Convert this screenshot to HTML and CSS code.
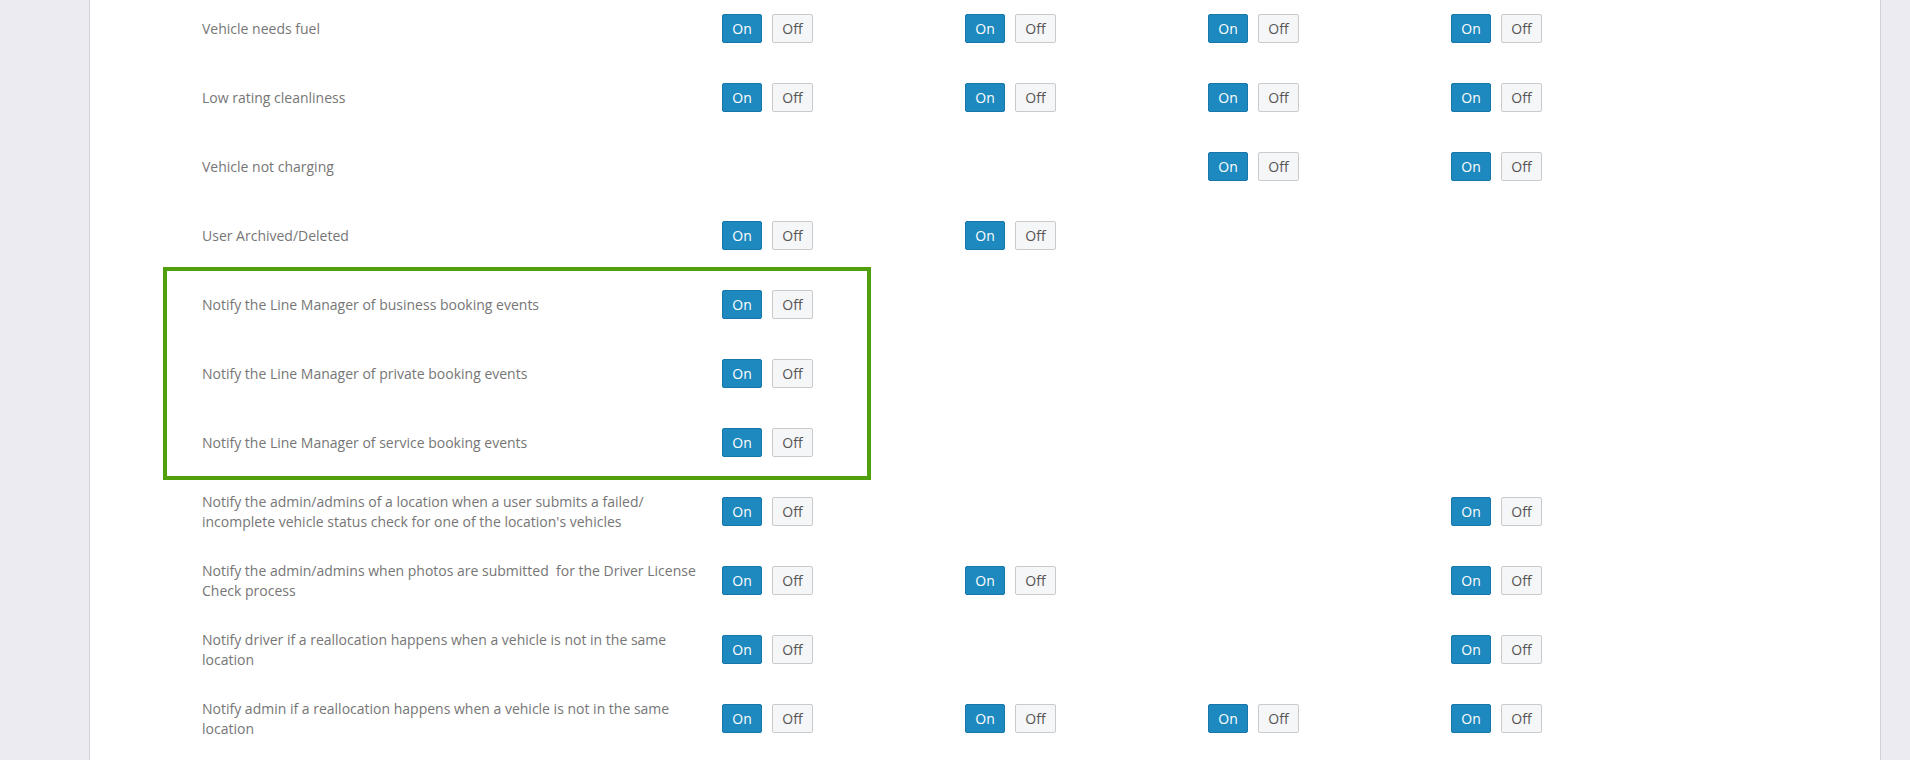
FILE: index.html
```html
<!DOCTYPE html>
<html lang="en">
<head>
<meta charset="utf-8">
<title>Notification settings</title>
<link rel="stylesheet" href="styles.css">
</head>
<body>
<div class="panel">
  <div class="table">
    <div class="row">
      <div class="label">Vehicle needs fuel</div>
      <div class="cell"><span class="btn on">On</span><span class="btn off">Off</span></div>
      <div class="cell"><span class="btn on">On</span><span class="btn off">Off</span></div>
      <div class="cell"><span class="btn on">On</span><span class="btn off">Off</span></div>
      <div class="cell"><span class="btn on">On</span><span class="btn off">Off</span></div>
    </div>
    <div class="row">
      <div class="label">Low rating cleanliness</div>
      <div class="cell"><span class="btn on">On</span><span class="btn off">Off</span></div>
      <div class="cell"><span class="btn on">On</span><span class="btn off">Off</span></div>
      <div class="cell"><span class="btn on">On</span><span class="btn off">Off</span></div>
      <div class="cell"><span class="btn on">On</span><span class="btn off">Off</span></div>
    </div>
    <div class="row">
      <div class="label">Vehicle not charging</div>
      <div class="cell"></div>
      <div class="cell"></div>
      <div class="cell"><span class="btn on">On</span><span class="btn off">Off</span></div>
      <div class="cell"><span class="btn on">On</span><span class="btn off">Off</span></div>
    </div>
    <div class="row">
      <div class="label">User Archived/Deleted</div>
      <div class="cell"><span class="btn on">On</span><span class="btn off">Off</span></div>
      <div class="cell"><span class="btn on">On</span><span class="btn off">Off</span></div>
      <div class="cell"></div>
      <div class="cell"></div>
    </div>
    <div class="row">
      <div class="label">Notify the Line Manager of business booking events</div>
      <div class="cell"><span class="btn on">On</span><span class="btn off">Off</span></div>
      <div class="cell"></div>
      <div class="cell"></div>
      <div class="cell"></div>
    </div>
    <div class="row">
      <div class="label">Notify the Line Manager of private booking events</div>
      <div class="cell"><span class="btn on">On</span><span class="btn off">Off</span></div>
      <div class="cell"></div>
      <div class="cell"></div>
      <div class="cell"></div>
    </div>
    <div class="row">
      <div class="label">Notify the Line Manager of service booking events</div>
      <div class="cell"><span class="btn on">On</span><span class="btn off">Off</span></div>
      <div class="cell"></div>
      <div class="cell"></div>
      <div class="cell"></div>
    </div>
    <div class="row">
      <div class="label">Notify the admin/admins of a location when a user submits a failed/ incomplete vehicle status check for one of the location's vehicles</div>
      <div class="cell"><span class="btn on">On</span><span class="btn off">Off</span></div>
      <div class="cell"></div>
      <div class="cell"></div>
      <div class="cell"><span class="btn on">On</span><span class="btn off">Off</span></div>
    </div>
    <div class="row">
      <div class="label">Notify the admin/admins when photos are submitted&nbsp; for the Driver License Check process</div>
      <div class="cell"><span class="btn on">On</span><span class="btn off">Off</span></div>
      <div class="cell"><span class="btn on">On</span><span class="btn off">Off</span></div>
      <div class="cell"></div>
      <div class="cell"><span class="btn on">On</span><span class="btn off">Off</span></div>
    </div>
    <div class="row">
      <div class="label">Notify driver if a reallocation happens when a vehicle is not in the same location</div>
      <div class="cell"><span class="btn on">On</span><span class="btn off">Off</span></div>
      <div class="cell"></div>
      <div class="cell"></div>
      <div class="cell"><span class="btn on">On</span><span class="btn off">Off</span></div>
    </div>
    <div class="row">
      <div class="label">Notify admin if a reallocation happens when a vehicle is not in the same location</div>
      <div class="cell"><span class="btn on">On</span><span class="btn off">Off</span></div>
      <div class="cell"><span class="btn on">On</span><span class="btn off">Off</span></div>
      <div class="cell"><span class="btn on">On</span><span class="btn off">Off</span></div>
      <div class="cell"><span class="btn on">On</span><span class="btn off">Off</span></div>
    </div>
  </div>
  <div class="highlight"></div>
</div>
</body>
</html>
```
FILE: styles.css
```css
html, body {
  margin: 0;
  padding: 0;
  height: 760px;
  overflow: hidden;
}
body {
  background: #edebf2;
  font-family: "Open Sans", "Liberation Sans", sans-serif;
  font-size: 14px;
}
.panel {
  position: relative;
  margin: 0 29px 0 89px;
  height: 760px;
  background: #ffffff;
  border-left: 1px solid #d3d1d8;
  border-right: 1px solid #d3d1d8;
  padding-left: 112px;
  overflow: hidden;
}
.table {
  margin-top: -6px;
}
.row {
  display: grid;
  grid-template-columns: 520px repeat(4, 243px);
  align-items: center;
  height: 69px;
}
.label {
  color: #767676;
  line-height: 19.5px;
  padding-right: 14px;
}
.cell {
  display: flex;
  gap: 10px;
  align-items: center;
}
.btn {
  box-sizing: border-box;
  display: inline-flex;
  align-items: center;
  justify-content: center;
  height: 29px;
  border-radius: 2px;
  font-size: 14px;
}
.on {
  width: 40px;
  background: #1e89bf;
  border: 1px solid #1877a9;
  color: #ffffff;
}
.off {
  width: 41px;
  background: #f5f6f8;
  border: 1px solid #c9cacc;
  color: #555555;
}
.highlight {
  position: absolute;
  left: 73px;
  top: 267px;
  width: 708px;
  height: 213px;
  box-sizing: border-box;
  border: 4px solid #50a00c;
}
```
